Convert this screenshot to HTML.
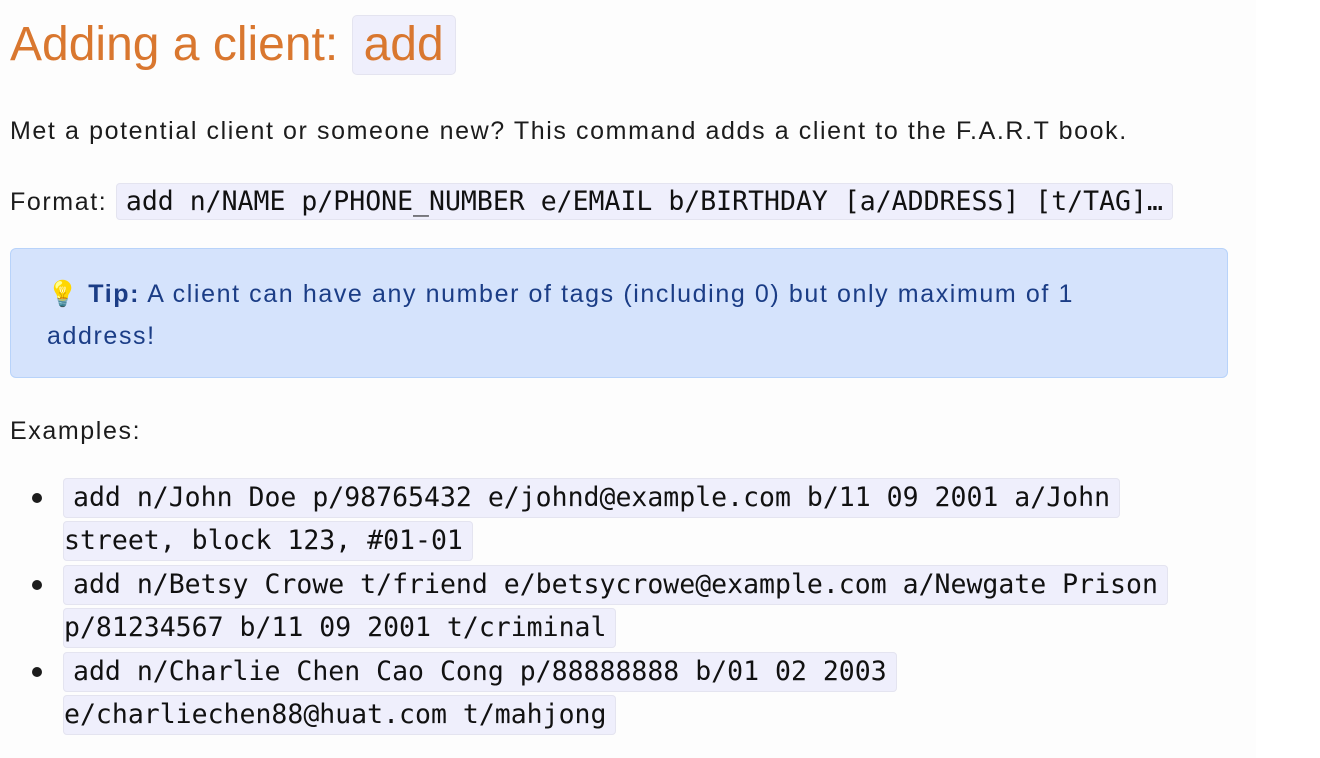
<!DOCTYPE html>
<html><head><meta charset="utf-8"><style>
html,body{margin:0;padding:0;background:#fff;}
.page{position:absolute;left:0;top:0;width:1256px;height:758px;background:#fdfdfd;overflow:hidden;font-family:"Liberation Sans",sans-serif;color:#1c1c1c;}
.abs{position:absolute;white-space:nowrap;}
h1{position:absolute;left:10px;top:14px;margin:0;font-weight:normal;font-size:48px;color:#d9772f;line-height:62px;white-space:nowrap;}
h1 .c{display:inline-block;background:#efeffc;border:1px solid #e4e4f0;border-radius:5px;padding:0 11px;line-height:58px;}
p{margin:0;font-size:25px;letter-spacing:1.6px;}
code{font-family:"DejaVu Sans Mono","Liberation Mono",monospace;font-size:26.5px;letter-spacing:0;background:#efeffc;border:1px solid #e4e4f0;border-radius:4px;padding:2px 9px;-webkit-box-decoration-break:clone;box-decoration-break:clone;color:#111;}
.tip{position:absolute;left:10px;top:248px;width:1216px;height:128px;background:#d5e3fc;border:1px solid #b8d3fa;border-radius:6px;color:#1b3d86;font-size:25px;letter-spacing:1.6px;}
.bul{position:absolute;left:32px;width:10px;height:10px;border-radius:50%;background:#1c1c1c;}
.ln{position:absolute;white-space:nowrap;}
.ln code{padding:3px 9px 4px;}
</style></head><body><div class="page">
<h1>Adding a client: <span class="c">add</span></h1>
<p class="abs" style="left:10px;top:117px;">Met a potential client or someone new? This command adds a client to the F.A.R.T book.</p>
<p class="abs" style="left:10px;top:186px;">Format: <code>add n/NAME p/PHONE_NUMBER e/EMAIL b/BIRTHDAY [a/ADDRESS] [t/TAG]…</code></p>
<div class="tip">
<div class="abs" style="left:36px;top:31px;">💡 <b>Tip:</b> A client can have any number of tags (including 0) but only maximum of 1</div>
<div class="abs" style="left:36px;top:73px;">address!</div>
</div>
<p class="abs" style="left:10px;top:417px;">Examples:</p>
<div class="bul" style="top:493px"></div>
<div class="ln" style="left:63px;top:482px"><code>add n/John Doe p/98765432 e/johnd@example.com b/11 09 2001 a/John</code></div>
<div class="ln" style="left:63px;top:525px"><code style="padding-left:0">street, block 123, #01-01</code></div>
<div class="bul" style="top:580px"></div>
<div class="ln" style="left:63px;top:569px"><code>add n/Betsy Crowe t/friend e/betsycrowe@example.com a/Newgate Prison</code></div>
<div class="ln" style="left:63px;top:612px"><code style="padding-left:0">p/81234567 b/11 09 2001 t/criminal</code></div>
<div class="bul" style="top:667px"></div>
<div class="ln" style="left:63px;top:656px"><code>add n/Charlie Chen Cao Cong p/88888888 b/01 02 2003</code></div>
<div class="ln" style="left:63px;top:699px"><code style="padding-left:0">e/charliechen88@huat.com t/mahjong</code></div>
</div></body></html>
